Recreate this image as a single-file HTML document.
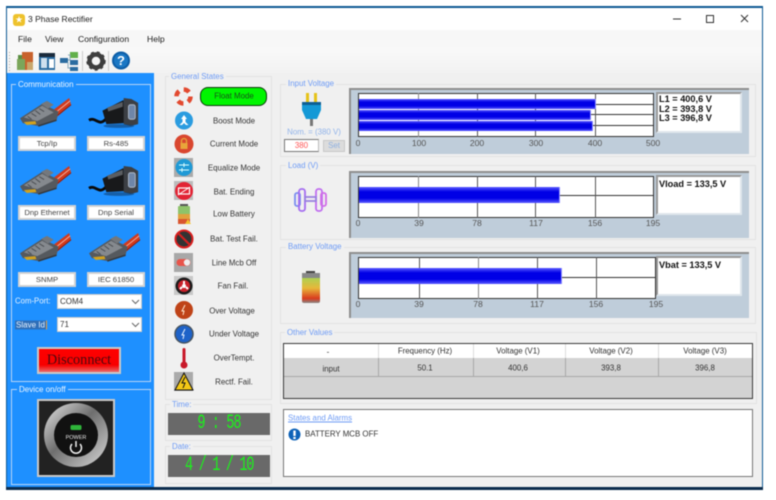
<!DOCTYPE html>
<html><head><meta charset="utf-8"><title>3 Phase Rectifier</title>
<style>
html,body{margin:0;padding:0;background:#fff}
#r{position:relative;width:776px;height:500px;overflow:hidden;background:#fff;font-family:"Liberation Sans",sans-serif;font-size:7.9px;color:#333;filter:blur(.45px)}
#r div,#r svg{position:absolute}
.t{white-space:nowrap;transform:translate(-50%,-50%)}
.l{white-space:nowrap;transform:translateY(-50%)}
.g{border:1px solid #e2e2e2}
.gt{background:#f0f0f0;color:#6f9cf5;padding:0 2px;white-space:nowrap;line-height:10px;font-size:7.9px}
.wg{border:1px solid #b9d4f5}
.wt{background:#1e90ff;color:#eef6ff;padding:0 2px;white-space:nowrap;line-height:10px;font-size:8px}
.lb{background:#fff;border:2px solid #d2d2d2;box-sizing:border-box;text-align:center;color:#444;font-size:7.7px;line-height:11px;width:58px;height:15px;white-space:nowrap}
.sel{background:#fff;left:57px;width:85px;height:15px;box-sizing:border-box;border:1px solid #ccc;padding-left:2px;line-height:13px;color:#333;font-size:8px}
.panel{background:#bfcdda;border-top:2px solid #8f8f8f;border-left:2px solid #8f8f8f;box-sizing:border-box}
.plot{background:#fff;border:1px solid #333;box-sizing:border-box}
.bar{background:linear-gradient(#5a5aff,#0000e6 30%,#0000e6 70%,#5a5aff);box-shadow:1px 0 0 #8a8aff}
.v{width:1px;background:#555}
.h{height:1px;background:#333}
.leg{background:#fff;border-top:2px solid #999;border-left:2px solid #999;border-right:2px solid #dfe6ec;border-bottom:2px solid #dfe6ec;box-sizing:border-box;font-weight:bold;color:#111;font-size:9.2px;line-height:9.7px;padding:1px 0 0 1px;white-space:nowrap}
.tk{color:#555;font-size:8.6px;white-space:nowrap;transform:translate(-50%,-50%)}
.lcd{background:#696969;left:168px;width:102px;height:22px;overflow:hidden}
.lcd span{position:absolute;left:0;right:0;text-align:center;top:0;line-height:22px;color:#1cf21c;font-family:"Liberation Mono",monospace;font-size:20px;white-space:nowrap;transform:scaleX(.68)}
</style></head><body><div id="r">
<svg width="0" height="0" style="left:0;top:0"><defs>
<symbol id="rj" viewBox="0 0 56 34">
<path d="M36 14L52 2l2 7-14 12z" fill="#d23a1c"/><path d="M38 17L53 5" stroke="#f0b0a0" stroke-width="1"/><path d="M40 20L54 9" stroke="#8a1c10" stroke-width="1"/>
<path d="M1 23L24 8l17 8-2 9-19 6-16-3z" fill="#55595e"/>
<path d="M5 22L24 10l12 7-17 9z" fill="#85898e"/>
<path d="M9 21l4 3M13 18l5 3M17 15l5 4M21 13l5 3" stroke="#4a4d52" stroke-width="1"/>
<path d="M23 8l6-3 7 4-6 4z" fill="#74787d"/>
<path d="M5 27l3 3 10-1-1-3z" fill="#d2a21e"/>
<path d="M20 31l19-6" stroke="#35383c" stroke-width="1.500"/>
</symbol>
<symbol id="db" viewBox="0 0 56 34">
<path d="M1 25c5-3 8 2 12 2s5-4 9-5" stroke="#0a0a0a" stroke-width="3" fill="none"/>
<path d="M15 15L37 4l1 24-19 1z" fill="#18191b"/>
<path d="M20 12L36 6v5L21 16z" fill="#5a5d61"/>
<path d="M37 2l8 1 7 4v22l-8 2-7-2z" fill="#3c3f44"/>
<rect x="42" y="9" width="7" height="15" rx="2" fill="#6f86a8" stroke="#aeb9c8"/>
<ellipse cx="32" cy="31" rx="16" ry="2" fill="#10406e" opacity=".6"/>
</symbol>
</defs></svg>

<!-- window -->
<div style="left:6px;top:6px;width:757px;height:484px;background:#0f5a94"></div>
<div style="left:7px;top:8px;width:755px;height:479px;background:#f0f0f0"></div>
<div style="left:6px;top:487px;width:757px;height:3px;background:#0b2c4d"></div>
<div style="left:7px;top:8px;width:755px;height:22px;background:#fff"></div>
<div style="left:7px;top:30px;width:755px;height:18px;background:#f7f7f7"></div>
<div style="left:7px;top:48px;width:755px;height:25px;background:linear-gradient(#f9f9f9,#f2f2f2)"></div>

<!-- title -->
<div style="left:13px;top:14px;width:12px;height:12px;background:#eec22c;border-radius:3px"></div>
<div class="t" style="left:19px;top:19.5px;color:#fff;font-size:9px">★</div>
<div class="l" style="left:28px;top:19px;font-size:8.5px;color:#222">3 Phase Rectifier</div>
<svg style="left:670px;top:12px" width="90" height="14"><path d="M3 7h8" stroke="#333"/><rect x="36.500" y="3.500" width="7" height="7" fill="none" stroke="#333"/><path d="M71 3l7 7M78 3l-7 7" stroke="#333"/></svg>

<!-- menu -->
<div class="l" style="left:18px;top:39px;font-size:8.6px;color:#222">File</div>
<div class="l" style="left:45px;top:39px;font-size:8.6px;color:#222">View</div>
<div class="l" style="left:78px;top:39px;font-size:8.6px;color:#222">Configuration</div>
<div class="l" style="left:147px;top:39px;font-size:8.6px;color:#222">Help</div>

<!-- toolbar -->
<svg style="left:8px;top:50px" width="130" height="22">
<path d="M1.500 2v19" stroke="#aaa" stroke-dasharray="1 2"/>
<rect x="10" y="5" width="14" height="15" fill="#5c8f42"/><rect x="14" y="2" width="11" height="18" fill="#c8622c"/><rect x="9" y="9" width="8" height="11" fill="#7ba65a"/><rect x="19" y="12" width="6" height="8" fill="#c9a66b"/>
<rect x="31" y="3" width="16" height="17" fill="#2a6ca0"/><rect x="31" y="3" width="16" height="4" fill="#1b2b3c"/><rect x="33" y="8" width="6" height="10" fill="#cfe0ee"/><rect x="41" y="9" width="5" height="9" fill="#fff"/>
<rect x="52" y="8" width="8" height="5" fill="#2a6ca0"/><rect x="62" y="2" width="8" height="6" fill="#62b04a"/><rect x="62" y="10" width="8" height="5" fill="#2a6ca0"/><rect x="62" y="17" width="8" height="4" fill="#2a6ca0"/><path d="M60 10h2M60 12v6h2M60 5h2v5" stroke="#8ab" fill="none"/>
<path d="M74.500 1v20M100.500 1v20" stroke="#ccc"/>
<circle cx="88" cy="11" r="6.500" fill="none" stroke="#3e3e3e" stroke-width="4.500"/><circle cx="88" cy="11" r="8.800" fill="none" stroke="#3e3e3e" stroke-width="1.800" stroke-dasharray="3 3"/>
<circle cx="113" cy="10.500" r="9" fill="#0d5da6"/><circle cx="113" cy="10.500" r="7" fill="#1a77c4"/>
<text x="113" y="15" font-family="Liberation Sans" font-weight="bold" font-size="13" fill="#fff" text-anchor="middle">?</text>
</svg>

<!-- left panel -->
<div style="left:7px;top:73px;width:147px;height:414px;background:#1e90ff"></div>
<div class="wg" style="left:11px;top:84px;width:138px;height:296px"></div>
<div class="wt" style="left:16px;top:80px">Communication</div>
<svg style="left:19px;top:96px" width="54" height="33"><use href="#rj" width="54" height="33"/></svg>
<svg style="left:88px;top:96px" width="54" height="33"><use href="#db" width="54" height="33"/></svg>
<div class="lb" style="left:18px;top:136px">Tcp/Ip</div>
<div class="lb" style="left:87px;top:136px">Rs-485</div>
<svg style="left:19px;top:164px" width="54" height="33"><use href="#rj" width="54" height="33"/></svg>
<svg style="left:88px;top:164px" width="54" height="33"><use href="#db" width="54" height="33"/></svg>
<div class="lb" style="left:18px;top:205px">Dnp Ethernet</div>
<div class="lb" style="left:87px;top:205px">Dnp Serial</div>
<svg style="left:19px;top:231px" width="54" height="33"><use href="#rj" width="54" height="33"/></svg>
<svg style="left:88px;top:231px" width="54" height="33"><use href="#rj" width="54" height="33"/></svg>
<div class="lb" style="left:18px;top:272px">SNMP</div>
<div class="lb" style="left:87px;top:272px">IEC 61850</div>
<div class="l" style="left:15px;top:301px;color:#e6f2ff;font-size:7.8px">Com-Port:</div>
<div class="sel" style="top:294px">COM4</div>
<svg style="left:131px;top:298px" width="9" height="8"><path d="M1 2l3.500 3.500L8 2" stroke="#666" fill="none"/></svg>
<div class="l" style="left:15px;top:325px;color:#e6f2ff;font-size:8px;background:#2f6fb8;padding:0 1px;border-right:1px solid #e8a040">Slave Id</div>
<div class="sel" style="top:317px">71</div>
<svg style="left:131px;top:321px" width="9" height="8"><path d="M1 2l3.500 3.500L8 2" stroke="#666" fill="none"/></svg>
<div style="left:37px;top:347px;width:84px;height:27px;box-sizing:border-box;border:2px solid #c9c9c9;background:linear-gradient(#ff0000,#f80000 70%,#e86a6a);text-align:center;font-family:'Liberation Serif',serif;font-size:14.300px;line-height:23px;color:#4a0a10">Disconnect</div>
<div class="wg" style="left:11px;top:389px;width:138px;height:94px"></div>
<div class="wt" style="left:17px;top:385px">Device on/off</div>
<div style="left:37px;top:399px;width:78px;height:78px;box-sizing:border-box;border:2px solid #c9c9c9;background:#222"></div>
<svg style="left:37px;top:399px" width="78" height="78">
<defs><linearGradient id="ring" x1="0" y1="0" x2="1" y2="1"><stop offset="0" stop-color="#e8e8e8"/><stop offset=".45" stop-color="#6e6e6e"/><stop offset="1" stop-color="#d8d8d8"/></linearGradient></defs>
<circle cx="39" cy="36" r="32" fill="url(#ring)"/><circle cx="39" cy="36" r="22" fill="#111"/>
<rect x="33.500" y="26" width="11" height="5" rx="1.500" fill="#2fb53a"/>
<text x="39" y="40" font-family="Liberation Sans" font-size="5.500" fill="#e8e8e8" text-anchor="middle">POWER</text>
<path d="M35 45a5.500 5.500 0 1 0 8 0" fill="none" stroke="#eee" stroke-width="1.500"/><path d="M39 42v6" stroke="#eee" stroke-width="1.500"/>
</svg>

<!-- general states -->
<div class="g" style="left:165px;top:76px;width:105px;height:322px"></div>
<div class="gt" style="left:169px;top:72px">General States</div>
<div style="left:200px;top:87px;width:67px;height:19px;box-sizing:border-box;background:#00f500;border:1px solid #0a3a0a;border-radius:8px"></div>
<div class="t" style="left:234px;top:96px;color:#17501a">Float Mode</div>
<div class="t" style="left:234px;top:121px">Boost Mode</div>
<div class="t" style="left:234px;top:144px">Current Mode</div>
<div class="t" style="left:234px;top:168px">Equalize Mode</div>
<div class="t" style="left:234px;top:192px">Bat. Ending</div>
<div class="t" style="left:234px;top:214px">Low Battery</div>
<div class="t" style="left:234px;top:239px">Bat. Test Fail.</div>
<div class="t" style="left:234px;top:263px">Line Mcb Off</div>
<div class="t" style="left:233px;top:286px">Fan Fail.</div>
<div class="t" style="left:232px;top:311px">Over Voltage</div>
<div class="t" style="left:234px;top:334px">Under Voltage</div>
<div class="t" style="left:234px;top:358px">OverTempt.</div>
<div class="t" style="left:234px;top:382px">Rectf. Fail.</div>

<svg style="left:170px;top:84px" width="30" height="310">
<circle cx="13.500" cy="12.500" r="7" fill="none" stroke="#f3f3f3" stroke-width="4.500"/>
<circle cx="13.500" cy="12.500" r="7" fill="none" stroke="#e2492f" stroke-width="4.500" stroke-dasharray="6 5"/>
<circle cx="14" cy="36.500" r="9" fill="#2a9ce0"/><path d="M14 31l3 4h-1.500v3l3 3H16l-2-2-2 2H9.500l3-3v-3H11z" fill="#fff"/>
<circle cx="14" cy="60" r="9.500" fill="#d9462f"/><rect x="10.500" y="59" width="7" height="6" fill="#e8a53a"/><path d="M11.500 59v-2a2.500 2.500 0 0 1 5 0v2" stroke="#e8a53a" fill="none" stroke-width="1.300"/>
<rect x="4" y="74" width="19" height="19" fill="#aaa"/><circle cx="14" cy="83.500" r="8.500" fill="#1f9ad6"/><path d="M9 81h10M9 86h10M14 79v4M12 84v4" stroke="#dff" stroke-width="1"/>
<rect x="4" y="97" width="19" height="19" fill="#bbb"/><circle cx="14" cy="107" r="9" fill="#e22334"/><rect x="8.500" y="104" width="11" height="6" fill="none" stroke="#fff" stroke-width="1.200"/><path d="M8 111l12-8" stroke="#fff"/>
<rect x="8" y="122" width="12" height="18" rx="1" fill="#8ec36a"/><rect x="8" y="130" width="12" height="6" fill="#e2a13d"/><rect x="8" y="135" width="12" height="5" fill="#d9552f"/><rect x="10" y="120" width="8" height="2" fill="#555"/><path d="M15 140l3-5 3 5z" fill="#f1c232"/>
<circle cx="14" cy="155" r="8.500" fill="#333" stroke="#d81f1f" stroke-width="2"/><path d="M8 149l12 12" stroke="#d81f1f" stroke-width="2"/>
<rect x="4" y="169" width="19" height="19" fill="#a8a8a8"/><rect x="6.500" y="175" width="14" height="7" rx="3.500" fill="#e8544a"/><circle cx="17" cy="178.500" r="3.200" fill="#eee"/>
<rect x="4" y="192" width="19" height="19" fill="#c8c8c8"/><circle cx="14" cy="202" r="8.500" fill="#1c1c1c"/><circle cx="14" cy="202" r="6" fill="#c8202a"/><circle cx="14" cy="202" r="2" fill="#fff"/><path d="M14 197v3M10 205l2-2M18 205l-2-2" stroke="#fff" stroke-width="2"/>
<circle cx="14" cy="226" r="9" fill="#bf4318"/><path d="M15 221l-3 6h2l-1 4" stroke="#ffe5cc" fill="none"/>
<circle cx="14" cy="250" r="9" fill="#1e62c8" stroke="#47535e" stroke-width="1.500"/><path d="M15 245l-3 6h2l-1 4" stroke="#e8f2ff" fill="none"/>
<rect x="12.500" y="264" width="3" height="16" rx="1.500" fill="#c8192a"/><circle cx="14" cy="281" r="3.500" fill="#c8192a"/>
<rect x="4" y="288" width="19" height="19" fill="#aaa"/><path d="M14 289l9 17H5z" fill="#f4c816" stroke="#111"/><path d="M15 293l-3 6h3l-2 5" stroke="#111" fill="none"/>
</svg>

<div class="g" style="left:165px;top:404px;width:105px;height:35px"></div>
<div class="gt" style="left:170px;top:400px">Time:</div>
<div class="lcd" style="top:413px"><span style="letter-spacing:-1.4px">9 : 58</span></div>
<div class="g" style="left:165px;top:446px;width:105px;height:36px"></div>
<div class="gt" style="left:170px;top:442px">Date:</div>
<div class="lcd" style="top:455px"><span style="letter-spacing:-2px">4 / 1 / 10</span></div>

<!-- input voltage -->
<div class="g" style="left:280px;top:84px;width:474px;height:71px"></div>
<div class="gt" style="left:286px;top:79px">Input Voltage</div>
<svg style="left:300px;top:92px" width="24" height="36">
<rect x="6" y="1" width="3" height="9" fill="#e6c319"/><rect x="14" y="1" width="3" height="9" fill="#e6c319"/>
<path d="M2 10h19v8l-4 9H6l-4-9z" fill="#1499d6"/><rect x="2" y="10" width="19" height="3" fill="#0e5f94"/><rect x="10" y="27" width="3" height="7" fill="#777"/>
</svg>
<div class="t" style="left:314px;top:132px;color:#92b4ea">Nom. = (380 V)</div>
<div style="left:284px;top:139px;width:35px;height:13px;background:#fff;box-sizing:border-box;border:1px solid #777;border-right-color:#bbb;text-align:center;color:#f55;line-height:11px">380</div>
<div style="left:323px;top:140px;width:22px;height:12px;background:#dcdcdc;box-sizing:border-box;border:1px solid #c8c8c8;text-align:center;color:#8fb0e0;line-height:10px">Set</div>

<div class="panel" style="left:349px;top:88px;width:400px;height:66px"></div>
<div class="plot" style="left:358px;top:93px;width:296px;height:44px"></div>
<div class="h" style="left:358px;top:104px;width:295px"></div><div class="h" style="left:358px;top:114px;width:295px"></div><div class="h" style="left:358px;top:125px;width:295px"></div>
<div class="v" style="left:418px;top:93px;height:44px;background:#888"></div><div class="v" style="left:477px;top:93px;height:44px"></div><div class="v" style="left:535px;top:93px;height:44px"></div><div class="v" style="left:595px;top:93px;height:44px"></div>
<div class="bar" style="left:359px;top:99px;width:236px;height:9.500px"></div>
<div class="bar" style="left:359px;top:110px;width:231px;height:9.500px"></div>
<div class="bar" style="left:359px;top:121px;width:233px;height:9.500px"></div>
<div class="leg" style="left:656px;top:92px;width:86px;height:41px">L1 = 400,6 V<br>L2 = 393,8 V<br>L3 = 396,8 V</div>
<div class="tk" style="left:358px;top:143px">0</div><div class="tk" style="left:419px;top:143px">100</div><div class="tk" style="left:477px;top:143px">200</div><div class="tk" style="left:536px;top:143px">300</div><div class="tk" style="left:595px;top:143px">400</div><div class="tk" style="left:653px;top:143px">500</div>

<!-- load -->
<div class="g" style="left:280px;top:165px;width:474px;height:73px"></div>
<div class="gt" style="left:286px;top:161px">Load (V)</div>
<svg style="left:293px;top:187px" width="36" height="26" fill="none" stroke="#a46cf0" stroke-width="1.800">
<rect x="2" y="6" width="5" height="13" rx="2" stroke="#7b8cf0"/><rect x="6" y="2" width="6" height="22" rx="2.500" stroke="#a46cf0"/><rect x="23" y="2" width="6" height="22" rx="2.500" stroke="#c06cf0"/><rect x="28" y="6" width="5" height="13" rx="2" stroke="#d06ce8"/><rect x="12" y="10" width="11" height="4" stroke="#9a80e0"/>
</svg>
<div class="panel" style="left:349px;top:171px;width:400px;height:67px"></div>
<div class="plot" style="left:358px;top:176px;width:296px;height:42px"></div>
<div class="h" style="left:358px;top:195px;width:295px"></div>
<div class="v" style="left:418px;top:176px;height:42px;background:#888"></div><div class="v" style="left:477px;top:176px;height:42px"></div><div class="v" style="left:535px;top:176px;height:42px"></div><div class="v" style="left:595px;top:176px;height:42px"></div>
<div class="bar" style="left:359px;top:187px;width:200px;height:16px"></div>
<div class="leg" style="left:656px;top:175px;width:86px;height:40px;line-height:12px">Vload = 133,5 V</div>
<div class="tk" style="left:358px;top:223px">0</div><div class="tk" style="left:419px;top:223px">39</div><div class="tk" style="left:477px;top:223px">78</div><div class="tk" style="left:536px;top:223px">117</div><div class="tk" style="left:595px;top:223px">156</div><div class="tk" style="left:653px;top:223px">195</div>

<!-- battery -->
<div class="g" style="left:280px;top:247px;width:474px;height:75px"></div>
<div class="gt" style="left:286px;top:242px">Battery Voltage</div>
<svg style="left:300px;top:270px" width="22" height="35">
<defs><linearGradient id="bt" x1="0" y1="0" x2="0" y2="1"><stop offset="0" stop-color="#8fdc5e"/><stop offset=".5" stop-color="#e8b83a"/><stop offset=".85" stop-color="#d93a1e"/><stop offset="1" stop-color="#888"/></linearGradient></defs>
<rect x="6" y="1" width="9" height="3" fill="#444"/><rect x="2" y="3" width="18" height="30" rx="2" fill="url(#bt)"/><rect x="2" y="3" width="18" height="5" fill="#888"/></svg>
<div class="panel" style="left:349px;top:252px;width:400px;height:66px"></div>
<div class="plot" style="left:358px;top:257px;width:298px;height:42px"></div>
<div class="h" style="left:358px;top:277px;width:297px"></div>
<div class="v" style="left:419px;top:257px;height:42px"></div><div class="v" style="left:478px;top:257px;height:42px;background:#888"></div><div class="v" style="left:537px;top:257px;height:42px"></div><div class="v" style="left:596px;top:257px;height:42px"></div>
<div class="bar" style="left:359px;top:268px;width:202px;height:16px"></div>
<div class="leg" style="left:656px;top:256px;width:86px;height:40px;line-height:12px">Vbat = 133,5 V</div>
<div class="tk" style="left:358px;top:304px">0</div><div class="tk" style="left:419px;top:304px">39</div><div class="tk" style="left:478px;top:304px">78</div><div class="tk" style="left:537px;top:304px">117</div><div class="tk" style="left:596px;top:304px">156</div><div class="tk" style="left:656px;top:304px">195</div>

<!-- other values -->
<div class="g" style="left:280px;top:332px;width:475px;height:70px"></div>
<div class="gt" style="left:285px;top:328px">Other Values</div>
<div style="left:283px;top:343px;width:470px;height:56px;box-sizing:border-box;border:1px solid #3a3a3a;background:#d3d3d3"></div>
<div style="left:284px;top:344px;width:468px;height:14px;background:#fff"></div>
<div style="left:284px;top:376px;width:468px;height:1px;background:#a9a9a9"></div>
<div style="left:378px;top:344px;width:1px;height:14px;background:#ddd"></div><div style="left:473px;top:344px;width:1px;height:14px;background:#ddd"></div><div style="left:565px;top:344px;width:1px;height:14px;background:#ddd"></div><div style="left:658px;top:344px;width:1px;height:14px;background:#ddd"></div>
<div style="left:378px;top:358px;width:1px;height:18px;background:#a9a9a9"></div><div style="left:473px;top:358px;width:1px;height:18px;background:#a9a9a9"></div><div style="left:565px;top:358px;width:1px;height:18px;background:#a9a9a9"></div><div style="left:658px;top:358px;width:1px;height:18px;background:#a9a9a9"></div>
<div class="t" style="left:328px;top:352px">-</div><div class="t" style="left:425px;top:351px">Frequency (Hz)</div><div class="t" style="left:518px;top:351px">Voltage (V1)</div><div class="t" style="left:611px;top:351px">Voltage (V2)</div><div class="t" style="left:705px;top:351px">Voltage (V3)</div>
<div class="t" style="left:331px;top:369px">input</div><div class="t" style="left:425px;top:368px">50.1</div><div class="t" style="left:518px;top:368px">400,6</div><div class="t" style="left:611px;top:368px">393,8</div><div class="t" style="left:705px;top:368px">396,8</div>

<!-- alarms -->
<div style="left:283px;top:409px;width:470px;height:68px;box-sizing:border-box;border:1px solid #777;background:#fff"></div>
<div class="l" style="left:288px;top:418px;color:#6f9cf5;text-decoration:underline">States and Alarms</div>
<svg style="left:288px;top:428px" width="13" height="13"><circle cx="6.500" cy="6.500" r="6" fill="#0d62b8"/><rect x="5.300" y="2.500" width="2.400" height="5.500" fill="#fff"/><rect x="5.300" y="9" width="2.400" height="2" fill="#fff"/></svg>
<div class="l" style="left:305px;top:434px;color:#333">BATTERY MCB OFF</div>
</div></body></html>
